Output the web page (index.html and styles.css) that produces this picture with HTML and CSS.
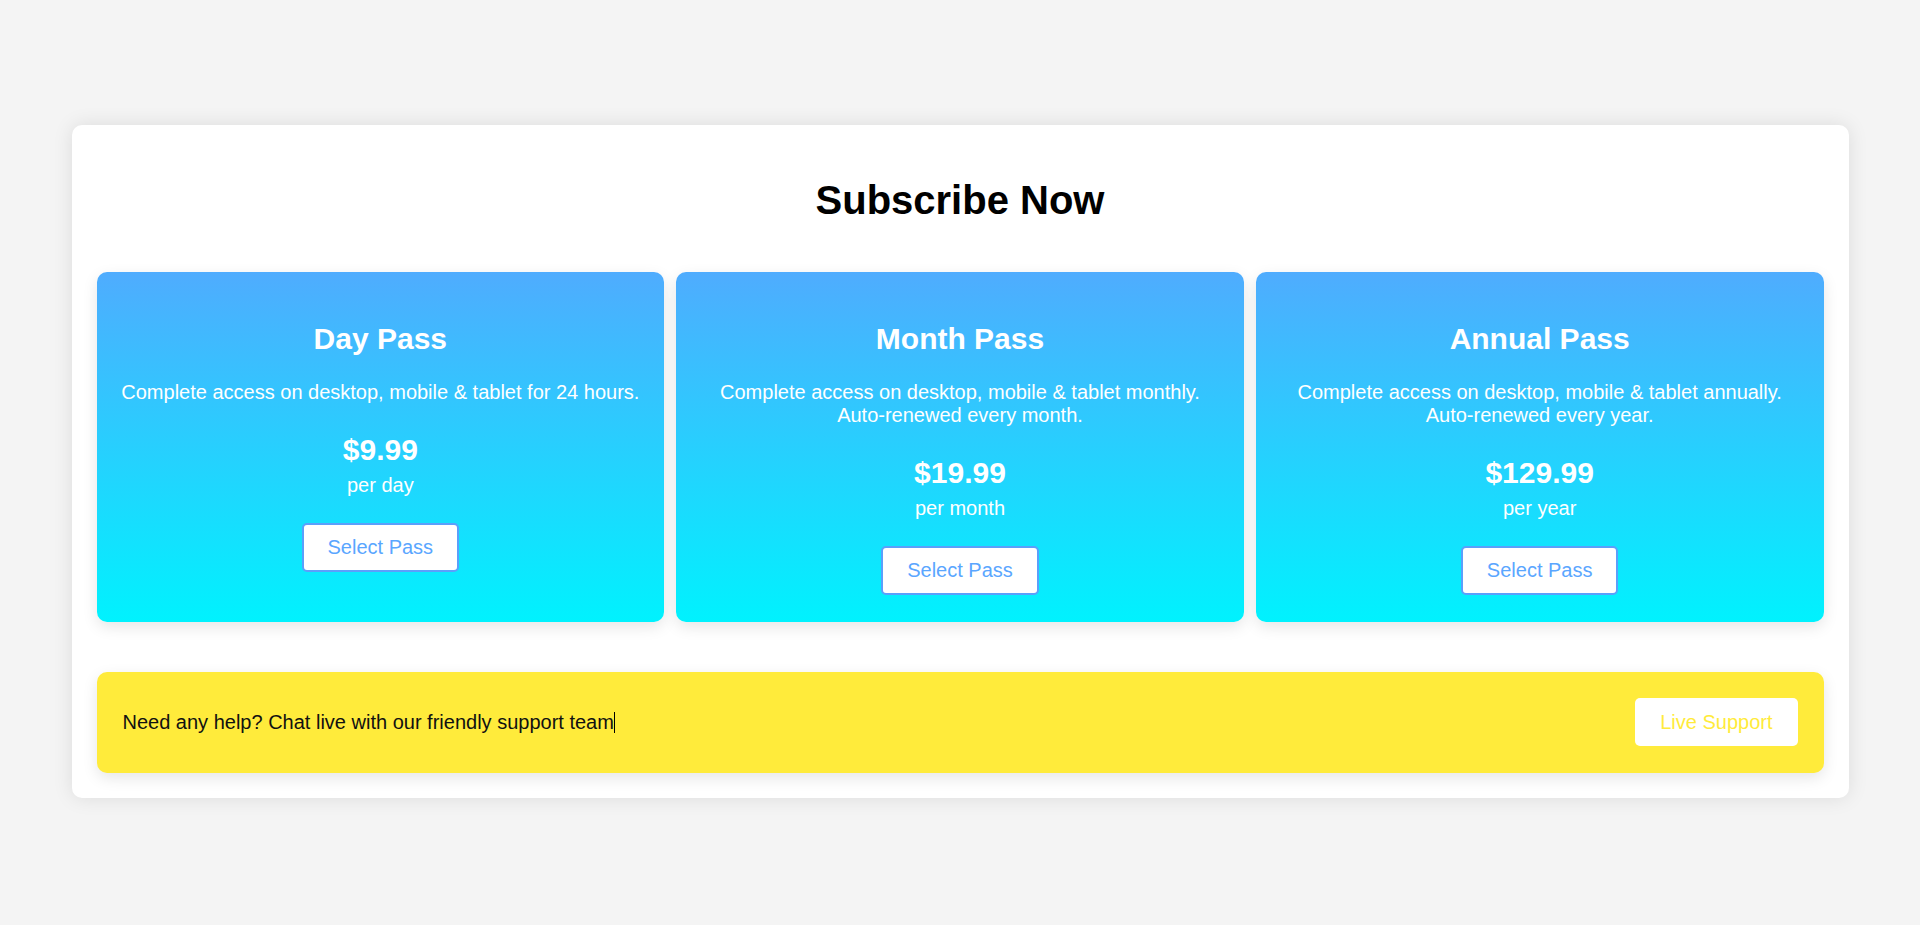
FILE: index.html
```html
<!DOCTYPE html>
<html lang="en">
<head>
<meta charset="utf-8">
<title>Subscribe Now</title>
<link rel="stylesheet" href="styles.css">
</head>
<body>
<main class="panel">
  <h1 class="panel-title">Subscribe Now</h1>
  <section class="plans">
    <article class="plan">
      <h2 class="plan-name">Day Pass</h2>
      <p class="plan-desc">Complete access on desktop, mobile &amp; tablet for 24 hours.</p>
      <div class="plan-price">$9.99</div>
      <div class="plan-period">per day</div>
      <button class="plan-btn">Select Pass</button>
    </article>
    <article class="plan">
      <h2 class="plan-name">Month Pass</h2>
      <p class="plan-desc">Complete access on desktop, mobile &amp; tablet monthly.<br>Auto-renewed every month.</p>
      <div class="plan-price">$19.99</div>
      <div class="plan-period">per month</div>
      <button class="plan-btn">Select Pass</button>
    </article>
    <article class="plan">
      <h2 class="plan-name">Annual Pass</h2>
      <p class="plan-desc">Complete access on desktop, mobile &amp; tablet annually.<br>Auto-renewed every year.</p>
      <div class="plan-price">$129.99</div>
      <div class="plan-period">per year</div>
      <button class="plan-btn">Select Pass</button>
    </article>
  </section>
  <section class="support">
    <p class="support-text">Need any help? Chat live with our friendly support team<span class="caret"></span></p>
    <button class="support-btn">Live Support</button>
  </section>
</main>
</body>
</html>
```

FILE: styles.css
```css
* {
  box-sizing: border-box;
}

html, body {
  margin: 0;
  padding: 0;
}

body {
  background: #f4f4f4;
  font-family: "Liberation Sans", Arial, sans-serif;
  color: #000;
  min-height: 925px;
}

.panel {
  width: 1777px;
  margin: 125px auto 0;
  background: #fff;
  border-radius: 10px;
  box-shadow: 0 0 20px rgba(0, 0, 0, 0.1);
  padding: 25px 25px 25px;
}

.panel-title {
  margin: 26.8px 0 49.2px;
  font-size: 40px;
  font-weight: bold;
  line-height: 46px;
  text-align: center;
  color: #000;
}

.plans {
  display: grid;
  grid-template-columns: repeat(3, 1fr);
  gap: 12px;
}

.plan {
  background: linear-gradient(to bottom, #4facfe 0%, #00f2fe 100%);
  border-radius: 10px;
  box-shadow: 0 5px 15px rgba(0, 0, 0, 0.1);
  color: #fff;
  text-align: center;
  padding: 25px 16px 27px;
  display: flex;
  flex-direction: column;
  align-items: center;
}

.plan-name {
  margin: 24.6px 0 24.5px;
  font-size: 30px;
  font-weight: bold;
  line-height: 34.5px;
}

.plan-desc {
  margin: 0 0 29.4px;
  font-size: 20px;
  line-height: 23px;
}

.plan-price {
  font-size: 30px;
  font-weight: bold;
  line-height: 34.5px;
  margin-bottom: 6.8px;
}

.plan-period {
  font-size: 20px;
  line-height: 23px;
  margin-bottom: 25.4px;
}

.plan-btn {
  font-family: "Liberation Sans", Arial, sans-serif;
  font-size: 20px;
  line-height: 23px;
  color: #5aa6ff;
  background: #fff;
  border: 2px solid #5b9ffb;
  border-radius: 5px;
  padding: 11px 24px;
  cursor: pointer;
}

.support {
  margin-top: 50px;
  background: #ffeb3b;
  border-radius: 10px;
  box-shadow: 0 5px 15px rgba(0, 0, 0, 0.1);
  padding: 26.5px 26px;
  display: flex;
  align-items: center;
  justify-content: space-between;
}

.support-text {
  margin: 0;
  font-size: 20px;
  line-height: 23px;
  color: #111;
}

.caret {
  display: inline-block;
  width: 1px;
  height: 21px;
  background: #000;
  vertical-align: -4px;
}

.support-btn {
  font-family: "Liberation Sans", Arial, sans-serif;
  font-size: 20px;
  line-height: 23px;
  color: #ffeb3b;
  background: #fff;
  border: none;
  border-radius: 5px;
  padding: 12.5px 25px;
  cursor: pointer;
}
```
